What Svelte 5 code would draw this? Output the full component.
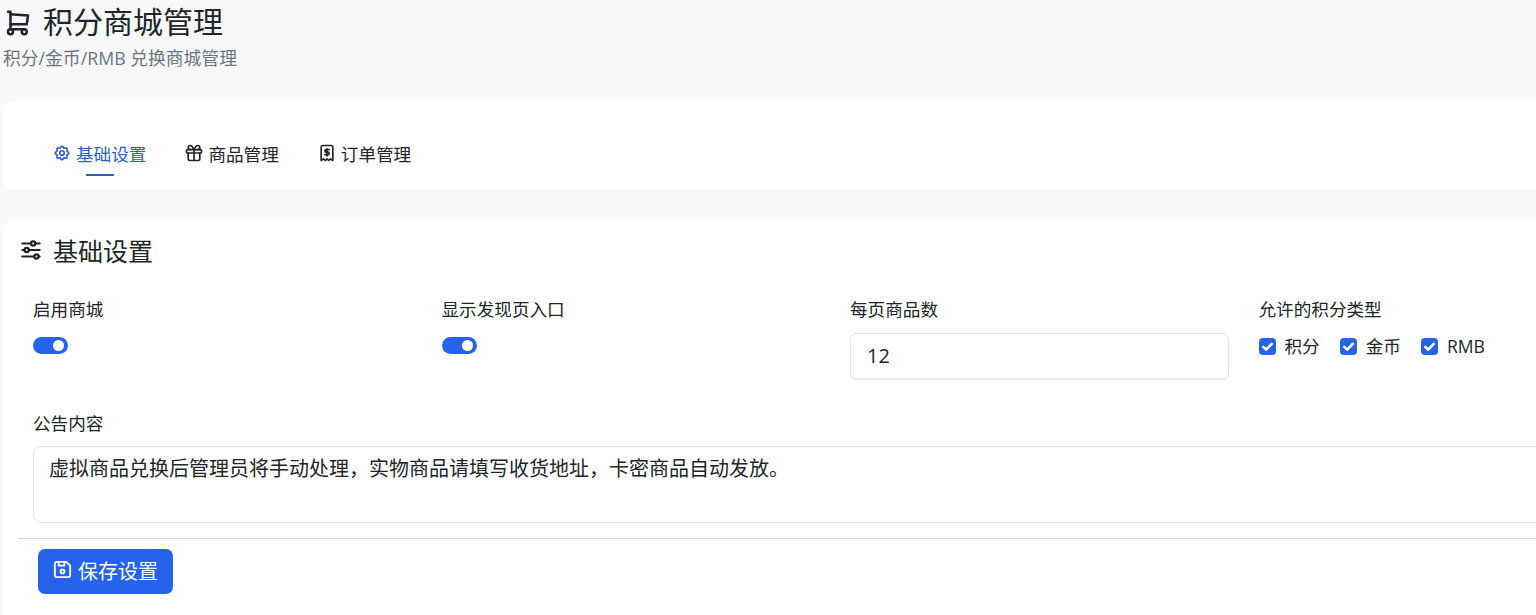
<script>
  const cols = [
    { label: '启用商城', kind: 'switch' },
    { label: '显示发现页入口', kind: 'switch' },
    { label: '每页商品数', kind: 'number' },
    { label: '允许的积分类型', kind: 'checks' }
  ];
  const checks = ['积分', '金币', 'RMB'];
</script>

<div class="page">
  <header class="head">
    <h1>
      <svg class="cart" viewBox="0 0 24 24" fill="none" stroke="currentColor" stroke-width="2" stroke-linecap="round" stroke-linejoin="round"><circle cx="6" cy="19" r="2"/><circle cx="17" cy="19" r="2"/><path d="M17 17H6V3H4"/><path d="M6 5l14 1-1 7H6"/></svg>
      积分商城管理
    </h1>
    <p>积分/金币/RMB 兑换商城管理</p>
  </header>

  <nav class="card tabs">
    <a class="tab active" href="#a">
      <svg class="gear" viewBox="0 0 24 24" fill="none" stroke="currentColor" stroke-width="2.2" stroke-linecap="round" stroke-linejoin="round"><path d="M10.3 4.3c.4-1.8 3-1.8 3.4 0a1.7 1.7 0 0 0 2.6 1.1c1.5-.9 3.3.8 2.4 2.4a1.7 1.7 0 0 0 1 2.5c1.8.4 1.8 3 0 3.4a1.7 1.7 0 0 0-1 2.6c.9 1.5-.9 3.3-2.4 2.4a1.7 1.7 0 0 0-2.6 1c-.4 1.8-3 1.8-3.4 0a1.7 1.7 0 0 0-2.6-1c-1.5.9-3.3-.9-2.4-2.4a1.7 1.7 0 0 0-1-2.6c-1.8-.4-1.8-3 0-3.4a1.7 1.7 0 0 0 1-2.5c-.9-1.6.9-3.3 2.4-2.4 1 .6 2.3.1 2.6-1.1z"/><circle cx="12" cy="12" r="3"/></svg>
      基础设置
    </a>
    <a class="tab" href="#b">
      <svg viewBox="0 0 24 24" fill="none" stroke="currentColor" stroke-width="2" stroke-linecap="round" stroke-linejoin="round"><rect x="3" y="8" width="18" height="4" rx="1"/><path d="M12 8v13"/><path d="M19 12v7a2 2 0 0 1-2 2H7a2 2 0 0 1-2-2v-7"/><path d="M7.5 8a2.5 2.5 0 0 1 0-5C10 3 12 8 12 8s2-5 4.5-5a2.5 2.5 0 0 1 0 5"/></svg>
      商品管理
    </a>
    <a class="tab" href="#c">
      <svg viewBox="0 0 24 24" fill="none" stroke="currentColor" stroke-width="2" stroke-linecap="round" stroke-linejoin="round"><path d="M5 21V5a2 2 0 0 1 2-2h10a2 2 0 0 1 2 2v16l-3-2-2 2-2-2-2 2-2-2-3 2"/><path d="M14.5 8H11a1.5 1.5 0 0 0 0 3h2a1.5 1.5 0 0 1 0 3H9.5"/><path d="M12 15.5V7"/></svg>
      订单管理
    </a>
  </nav>

  <section class="card panel">
    <h2>
      <svg viewBox="0 0 24 24" fill="none" stroke="currentColor" stroke-width="2" stroke-linecap="round" stroke-linejoin="round"><circle cx="14" cy="6" r="2"/><path d="M4 6h8M16 6h4"/><circle cx="8" cy="12" r="2"/><path d="M4 12h2M10 12h10"/><circle cx="17" cy="18" r="2"/><path d="M4 18h11M19 18h1"/></svg>
      基础设置
    </h2>

    <div class="grid">
      {#each cols as c}
        <div class="col">
          <div class="label">{c.label}</div>
          {#if c.kind === 'switch'}
            <span class="switch"><span class="knob"></span></span>
          {:else if c.kind === 'number'}
            <input class="field" type="text" value="12" />
          {:else}
            <div class="checks">
              {#each checks as name}
                <span class="check">
                  <span class="box">
                    <svg viewBox="0 0 16 16" fill="none" stroke="#fff" stroke-width="2.4" stroke-linecap="round" stroke-linejoin="round"><path d="M4 8.3l2.8 2.7L12 5.5"/></svg>
                  </span>
                  {name}
                </span>
              {/each}
            </div>
          {/if}
        </div>
      {/each}
    </div>

    <div class="notice">
      <div class="label">公告内容</div>
      <div class="area">虚拟商品兑换后管理员将手动处理，实物商品请填写收货地址，卡密商品自动发放。</div>
    </div>

    <hr />

    <button class="save">
      <svg viewBox="0 0 24 24" fill="none" stroke="currentColor" stroke-width="1.9" stroke-linecap="round" stroke-linejoin="round"><path d="M6 4h10l4 4v10a2 2 0 0 1-2 2H6a2 2 0 0 1-2-2V6a2 2 0 0 1 2-2"/><circle cx="12" cy="14" r="2"/><path d="M14 4v4H8V4"/></svg>
      <span>保存设置</span>
    </button>
  </section>
</div>

<style>
  :global(body) {
    margin: 0;
    background: #f7f8fa;
    overflow: hidden;
  }
  .page {
    width: 1700px;
    height: 615px;
    overflow: hidden;
    box-sizing: border-box;
    padding: 0 0 0 3px;
    font-family: "Open Sans", "Noto Sans CJK SC", sans-serif;
    color: #212529;
  }
  .head { height: 101px; }
  h1 {
    margin: 0;
    display: flex;
    align-items: center;
    gap: 10px;
    height: 44px;
    font-size: 30px;
    font-weight: 400;
    line-height: 44px;
  }
  .cart { width: 30px; height: 30px; margin-top: 2px; }
  .head p {
    margin: 2px 0 0;
    font-size: 17.8px;
    line-height: 24px;
    color: #6c757d;
  }
  .card {
    background: #fff;
    border-radius: 10px;
  }
  .tabs {
    height: 89px;
    display: flex;
    box-sizing: border-box;
    padding: 34px 0 0 35px;
    gap: 8px;
  }
  .tab {
    position: relative;
    display: flex;
    align-items: center;
    gap: 6px;
    height: 36px;
    padding: 0 16px;
    font-size: 17.6px;
    color: #212529;
    text-decoration: none;
  }
  .tab svg { width: 20px; height: 20px; margin: 0 -2px; }
  .tab svg.gear { width: 18px; height: 18px; margin: 0 -1px; }
  .tab.active { color: #2b5fc1; }
  .tab.active::after {
    content: "";
    position: absolute;
    left: 48px;
    top: 39px;
    width: 28px;
    height: 2px;
    background: #2b5fc1;
  }
  .panel {
    margin-top: 30px;
    height: 420px;
    padding: 12px 0 0 15px;
  }
  h2 {
    margin: 0;
    display: flex;
    align-items: center;
    gap: 9px;
    height: 36px;
    font-size: 25px;
    font-weight: 400;
  }
  h2 svg { width: 26px; height: 26px; }
  .grid {
    display: grid;
    grid-template-columns: repeat(4, 408.5px);
    margin: 27px 0 0 15px;
    height: 114px;
  }
  .col { display: flex; flex-direction: column; align-items: flex-start; }
  .label { font-size: 17.6px; line-height: 28px; }
  .switch {
    margin-top: 14px;
    width: 35px;
    height: 17px;
    border-radius: 9px;
    background: #2563eb;
    position: relative;
  }
  .knob {
    position: absolute;
    right: 4px;
    top: 3px;
    width: 11px;
    height: 11px;
    border-radius: 50%;
    background: #fff;
  }
  .field {
    margin-top: 10px;
    width: 379px;
    height: 47px;
    box-sizing: border-box;
    border: 1px solid #dee2e6;
    border-radius: 6px;
    padding: 0 16px 2px;
    font: inherit;
    font-size: 20px;
    color: #212529;
  }
  .checks { display: flex; gap: 20px; margin-top: 9px; }
  .check { display: flex; align-items: center; gap: 9px; font-size: 17.6px; line-height: 28px; }
  .box {
    width: 17px;
    height: 17px;
    border-radius: 4px;
    background: #2563eb;
    display: flex;
  }
  .box svg { width: 17px; height: 17px; }
  .notice { margin-left: 15px; }
  .area {
    margin-top: 9px;
    width: 1640px;
    height: 77px;
    box-sizing: border-box;
    border: 1px solid #dee2e6;
    border-radius: 8px;
    padding: 8px 15px;
    font-size: 20px;
    line-height: 28px;
    color: #212529;
  }
  hr {
    margin: 15px 0 10px;
    border: 0;
    border-top: 1px solid #d5d8dc;
  }
  .save {
    margin-left: 20px;
    width: 135px;
    height: 45px;
    border: 0;
    border-radius: 7px;
    background: #2563eb;
    color: #fff;
    font: inherit;
    font-size: 20px;
    display: flex;
    align-items: center;
    justify-content: center;
    gap: 6px;
    padding: 0 0 2px;
  }
  .save svg { width: 23px; height: 23px; margin: -3px -2px 0; }
</style>
